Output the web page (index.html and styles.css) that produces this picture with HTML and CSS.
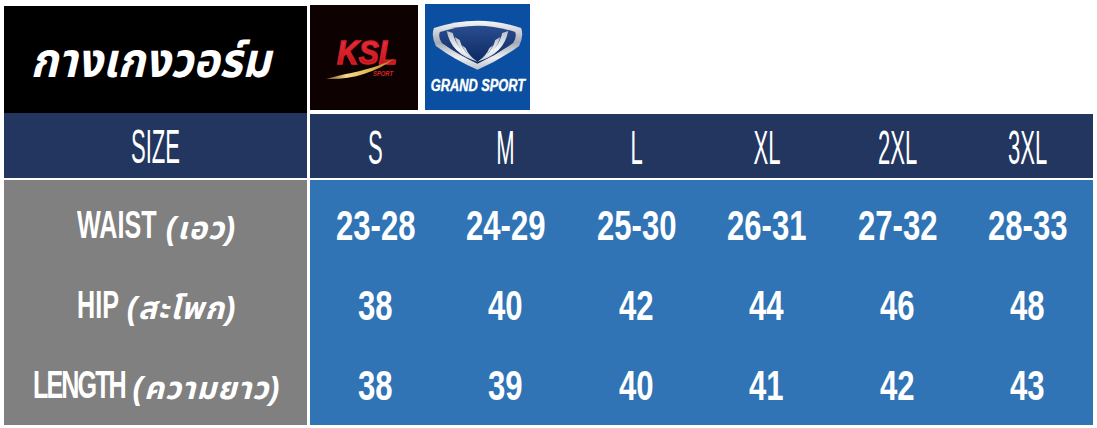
FILE: index.html
```html
<!DOCTYPE html>
<html lang="th">
<head>
<meta charset="utf-8">
<title>กางเกงวอร์ม</title>
<link rel="stylesheet" href="styles.css">
</head>
<body>
<div class="page">
  <div class="top">
    <div class="title"><span>กางเกงวอร์ม</span></div>
    <div class="logo ksl">
      <svg width="108" height="105" viewBox="0 0 108 105">
        <defs>
          <linearGradient id="kred" x1="0" y1="0" x2="0" y2="1">
            <stop offset="0" stop-color="#f23a40"/>
            <stop offset="1" stop-color="#b50d16"/>
          </linearGradient>
          <linearGradient id="kgold" x1="0" y1="0" x2="1" y2="0">
            <stop offset="0" stop-color="#6e4f16"/>
            <stop offset="0.3" stop-color="#f5d98a"/>
            <stop offset="0.65" stop-color="#e0b650"/>
            <stop offset="1" stop-color="#a87a22"/>
          </linearGradient>
        </defs>
        <text x="27" y="59" class="ksl-text" textLength="60" lengthAdjust="spacingAndGlyphs">KSL</text>
        <path d="M16 74 C35 68 62 66 85 53 C66 68 40 75 16 74 Z" fill="url(#kgold)"/>
        <text x="63" y="70.5" class="ksl-sport" textLength="20" lengthAdjust="spacingAndGlyphs">SPORT</text>
      </svg>
    </div>
    <div class="logo gs">
      <svg class="gs-emblem" width="105" height="72" viewBox="0 0 106 72">
        <defs>
          <linearGradient id="silver" x1="0" y1="0" x2="0" y2="1">
            <stop offset="0" stop-color="#f7f8fa"/>
            <stop offset="0.45" stop-color="#a3abb5"/>
            <stop offset="0.75" stop-color="#eef0f2"/>
            <stop offset="1" stop-color="#b9c0c8"/>
          </linearGradient>
          <linearGradient id="inner" x1="0" y1="0" x2="0" y2="1">
            <stop offset="0" stop-color="#2a4d90"/>
            <stop offset="1" stop-color="#0b2760"/>
          </linearGradient>
          <linearGradient id="wing" x1="0" y1="0" x2="0" y2="1">
            <stop offset="0" stop-color="#b8c0c9"/>
            <stop offset="0.6" stop-color="#f3f5f7"/>
            <stop offset="1" stop-color="#c4cad1"/>
          </linearGradient>
        </defs>
        <path d="M9 24 Q53 9 97 24 Q100 32 95 42 Q76 56 53 66 Q30 56 11 42 Q6 32 9 24 Z" fill="url(#silver)"/>
        <path d="M15 28 Q53 15 91 28 Q93 33 89 39 Q72 51 53 60 Q34 51 17 39 Q13 33 15 28 Z" fill="url(#inner)"/>
        <g fill="url(#wing)">
          <path d="M22 27 Q26 50 53 58 Q32 47 28 29 Z"/>
          <path d="M30 33 Q35 51 53 58 Q38 49 35 36 Z"/>
          <path d="M37 41 Q43 53 53 58 Q44 52 41 44 Z"/>
          <path d="M84 27 Q80 50 53 58 Q74 47 78 29 Z"/>
          <path d="M76 33 Q71 51 53 58 Q68 49 71 36 Z"/>
          <path d="M69 41 Q63 53 53 58 Q62 52 65 44 Z"/>
        </g>
      </svg>
      <span class="gs-text">GRAND SPORT</span>
    </div>
  </div>
  <div class="table">
    <div class="side">
      <div class="head"><span class="thin">SIZE</span></div>
      <div class="body">
        <div class="label"><span class="en en-waist"><span>WAIST</span></span><span class="th">(เอว)</span></div>
        <div class="label"><span class="en en-hip"><span>HIP</span></span><span class="th">(สะโพก)</span></div>
        <div class="label"><span class="en en-length"><span>LENGTH</span></span><span class="th">(ความยาว)</span></div>
      </div>
    </div>
    <div class="main">
      <div class="head grid6">
        <div class="cell"><span class="thin">S</span></div>
        <div class="cell"><span class="thin">M</span></div>
        <div class="cell"><span class="thin">L</span></div>
        <div class="cell"><span class="thin">XL</span></div>
        <div class="cell"><span class="thin">2XL</span></div>
        <div class="cell"><span class="thin">3XL</span></div>
      </div>
      <div class="body grid6 rows">
        <div class="cell"><span class="num">23-28</span></div>
        <div class="cell"><span class="num">24-29</span></div>
        <div class="cell"><span class="num">25-30</span></div>
        <div class="cell"><span class="num">26-31</span></div>
        <div class="cell"><span class="num">27-32</span></div>
        <div class="cell"><span class="num">28-33</span></div>
        <div class="cell"><span class="num">38</span></div>
        <div class="cell"><span class="num">40</span></div>
        <div class="cell"><span class="num">42</span></div>
        <div class="cell"><span class="num">44</span></div>
        <div class="cell"><span class="num">46</span></div>
        <div class="cell"><span class="num">48</span></div>
        <div class="cell"><span class="num">38</span></div>
        <div class="cell"><span class="num">39</span></div>
        <div class="cell"><span class="num">40</span></div>
        <div class="cell"><span class="num">41</span></div>
        <div class="cell"><span class="num">42</span></div>
        <div class="cell"><span class="num">43</span></div>
      </div>
    </div>
  </div>
</div>
</body>
</html>
```

FILE: styles.css
```css
* { box-sizing: border-box; }
html, body { margin: 0; padding: 0; background: #ffffff; }
body { font-family: "Liberation Sans", "Noto Sans Thai", "Loma", "Garuda", "Noto Sans", sans-serif; }
.page { width: 1097px; height: 428px; padding: 0 4px; overflow: hidden; }

.top { display: flex; align-items: flex-start; height: 113px; }
.title {
  width: 303px; height: 107px; margin-top: 6px; background: #000;
  display: flex; align-items: center; justify-content: center;
  padding-top: 2px; padding-right: 10px;
}
.title span {
  color: #fff; font-weight: 700; font-style: italic; font-size: 48px; line-height: 1;
  display: inline-block; transform: scaleX(0.92);
}
.logo { flex: none; }
.logo svg { display: block; }
.ksl { width: 108px; height: 105px; margin-top: 5px; margin-left: 3px; background: #0e0101; }
.gs {
  width: 105px; height: 106px; margin-top: 4px; margin-left: 7px; background: #0b4fa3;
  display: flex; flex-direction: column; align-items: center;
}
.ksl-text { font-family: "Liberation Sans", sans-serif; font-weight: 700; font-style: italic; font-size: 34px; fill: url(#kred); stroke: #d81f28; stroke-width: 1.4px; }
.ksl-sport { font-family: "Liberation Sans", sans-serif; font-weight: 700; font-style: italic; font-size: 6.5px; fill: #d8242c; }
.gs-text {
  display: block; color: #fff; font-family: "Liberation Sans", sans-serif; font-weight: 700;
  font-style: italic; font-size: 16px; line-height: 16px; white-space: nowrap;
  transform: scaleX(0.8); margin-top: 2px; -webkit-text-stroke: 0.4px #fff;
}

.table { display: flex; }
.side { width: 303px; flex: none; }
.main { flex: 1; margin-left: 3px; }
.head { height: 65px; background: #22365f; display: flex; align-items: center; justify-content: center; }
.main .head { margin-top: 1px; height: 64px; }
.body { height: 245px; margin-top: 2px; padding-top: 5px; }
.side .body { background: #808080; display: grid; grid-template-rows: 80px 80px 80px; }
.main .body { background: #3074b5; }
.grid6 { display: grid; grid-template-columns: repeat(6, 1fr); }
.rows { grid-template-rows: 80px 80px 80px; }
.cell { display: flex; align-items: center; justify-content: center; }

.thin {
  display: inline-block; color: #fff; font-family: "Liberation Sans", sans-serif;
  font-weight: 400; font-size: 49px; line-height: 1; transform: scaleX(0.45);
  padding-top: 2px;
}
.num {
  display: inline-block; color: #fff; font-weight: 700; font-size: 42px; line-height: 1;
  transform: scaleX(0.74); padding-top: 2px;
}
.label {
  display: flex; align-items: center; justify-content: center; color: #fff; gap: 8px;
  padding-left: 2px;
}
.label .en { display: block; height: 40px; white-space: nowrap; }
.label .en span {
  display: inline-block; font-weight: 700; font-size: 39px; line-height: 40px;
  transform: scaleX(0.645); transform-origin: left center;
}
.en-waist { width: 81px; }
.en-hip { width: 42px; }
.en-length { width: 92px; }
.en-length span { letter-spacing: -3px; }
.label .th {
  display: inline-block; font-weight: 700; font-style: italic; font-size: 31px; line-height: 1;
  padding-top: 6px; letter-spacing: 1px;
}
```
